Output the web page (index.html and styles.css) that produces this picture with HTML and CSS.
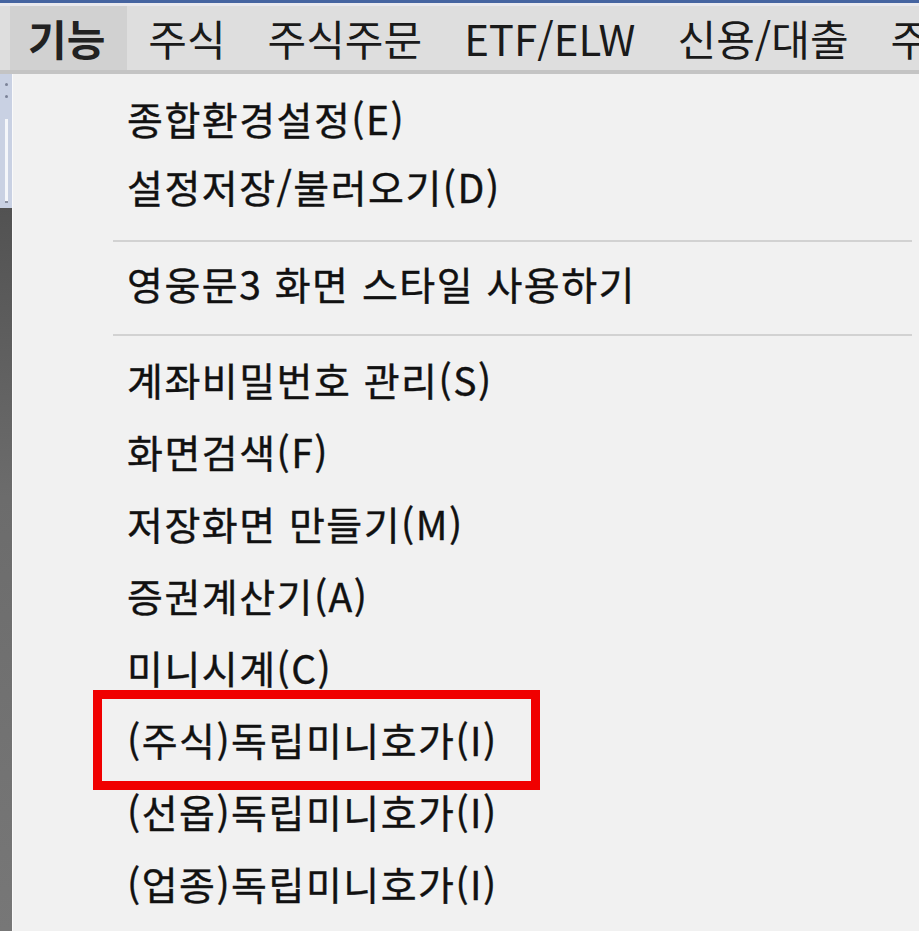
FILE: index.html
```html
<!DOCTYPE html>
<html lang="ko">
<head>
<meta charset="utf-8">
<title>기능 메뉴</title>
<link rel="stylesheet" href="styles.css">
</head>
<body>
<div class="screen">
  <div class="titleline"></div>
  <div class="menubar">
    <span class="mb-item active">기능</span>
    <span class="mb-item">주식</span>
    <span class="mb-item">주식주문</span>
    <span class="mb-item">ETF/ELW</span>
    <span class="mb-item">신용/대출</span>
    <span class="mb-item">주</span>
  </div>
  <div class="main">
    <div class="leftstrip">
      <div class="ls-top">
        <span class="dot"></span>
        <span class="dot"></span>
        <span class="ls-bar"></span>
      </div>
      <div class="ls-bottom"></div>
    </div>
    <div class="dropdown">
      <div class="item compact">종합환경설정(E)</div>
      <div class="item compact">설정저장/불러오기(D)</div>
      <div class="sep sep-a"></div>
      <div class="item mid">영웅문3 화면 스타일 사용하기</div>
      <div class="sep sep-b"></div>
      <div class="item">계좌비밀번호 관리(S)</div>
      <div class="item">화면검색(F)</div>
      <div class="item">저장화면 만들기(M)</div>
      <div class="item">증권계산기(A)</div>
      <div class="item">미니시계(C)</div>
      <div class="item">(주식)독립미니호가(I)</div>
      <div class="item">(선옵)독립미니호가(I)</div>
      <div class="item">(업종)독립미니호가(I)</div>
      <div class="highlight-box"></div>
    </div>
  </div>
</div>
</body>
</html>
```

FILE: styles.css
```css
html, body {
  margin: 0;
  padding: 0;
}
body {
  width: 919px;
  height: 931px;
  overflow: hidden;
  background: #f1f1f1;
  font-family: "Noto Sans CJK KR", "Noto Sans", sans-serif;
  color: #111;
}
.screen {
  display: flex;
  flex-direction: column;
  width: 919px;
  height: 931px;
}
.titleline {
  height: 3px;
  background: #4564a0;
  border-bottom: 3px solid #e9e9ee;
  flex: none;
}
.menubar {
  flex: none;
  height: 64px;
  display: flex;
  align-items: stretch;
  background: #dedede;
  border-bottom: 4px solid #c4c4c4;
  white-space: nowrap;
  overflow: hidden;
  font-size: 42px;
  color: #1a1a1a;
}
.mb-item {
  flex: none;
  display: flex;
  align-items: center;
  padding: 0 21px;
  line-height: 1;
  font-weight: 400;
}
.mb-item.active {
  margin-left: 10px;
  padding: 0 22px 0 18px;
  background: #d1d1d1;
  font-weight: 700;
  color: #222;
}
.main {
  flex: 1;
  display: flex;
  min-height: 0;
}
.leftstrip {
  width: 12px;
  flex: none;
  display: flex;
  flex-direction: column;
  border-right: 1px solid #fafafa;
}
.ls-top {
  height: 134px;
  background: #c9d1e3;
  display: flex;
  flex-direction: column;
  align-items: center;
  padding-top: 9px;
  box-sizing: border-box;
}
.dot {
  width: 3px;
  height: 3px;
  background: #7c8398;
  border-radius: 50%;
  margin-bottom: 9px;
}
.ls-bar {
  margin-top: 12px;
  width: 3px;
  height: 82px;
  background: #f4f6fa;
  border-bottom: 2px solid #8a90a0;
}
.ls-bottom {
  flex: 1;
  background: linear-gradient(#525252, #6c6c6c 40%, #777);
}
.dropdown {
  flex: 1;
  position: relative;
  background: #f1f1f1;
  padding-top: 11px;
  font-size: 39px;
  letter-spacing: 1.5px;
  font-weight: 400;
  -webkit-text-stroke: 0.4px #111;
}
.item {
  height: 72px;
  line-height: 72px;
  padding-left: 114px;
  white-space: nowrap;
  color: #111;
}
.item.compact {
  height: 68px;
  line-height: 66px;
}
.item.mid {
  height: 70px;
  line-height: 68px;
}
.sep {
  height: 2px;
  background: #d2d2d2;
  margin-left: 100px;
  margin-right: 7px;
}
.sep-a {
  margin-top: 19px;
  margin-bottom: 7px;
}
.sep-b {
  margin-top: 15px;
  margin-bottom: 7px;
}
.highlight-box {
  position: absolute;
  left: 80px;
  top: 616px;
  width: 447px;
  height: 100px;
  box-sizing: border-box;
  border: 9px solid #f00000;
}
```
